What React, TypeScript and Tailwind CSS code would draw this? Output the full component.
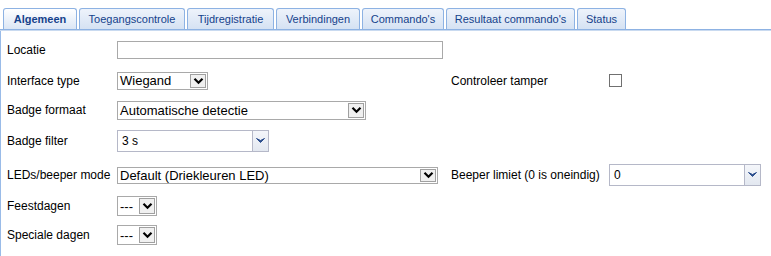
import React from "react";

const tabs = [
  { label: "Algemeen", w: "w-[74px]", active: true },
  { label: "Toegangscontrole", w: "w-[106px]" },
  { label: "Tijdregistratie", w: "w-[87px]" },
  { label: "Verbindingen", w: "w-[84px]" },
  { label: "Commando's", w: "w-[82px]" },
  { label: "Resultaat commando's", w: "w-[129px]" },
  { label: "Status", w: "w-[49px]" },
];

function Chevron() {
  return (
    <svg width="11" height="8" viewBox="0 0 11 8">
      <path d="M1.5 1.8 L5.5 5.8 L9.5 1.8" fill="none" stroke="#000" strokeWidth="2.2" />
    </svg>
  );
}

// native windows-style select
function NativeSelect({ value, w, h }: { value: string; w: string; h: string }) {
  return (
    <div className={`flex ${w} ${h} items-stretch border border-[#a9a9a9] bg-white`}>
      <div className="flex-1 overflow-hidden whitespace-nowrap pl-[2px] text-[13px] leading-none text-black flex items-center">
        {value}
      </div>
      <div className="m-[1px] flex w-[16px] items-center justify-center border border-[#a0a0a0] bg-[#f0f0f0]">
        <Chevron />
      </div>
    </div>
  );
}

// ext-style combo box
function Combo({ value, w }: { value: string; w: string }) {
  return (
    <div className={`flex ${w} h-[22px] items-stretch border border-[#b5b8c8] bg-white`}>
      <div className="flex flex-1 items-center pl-[4px] text-[12px] text-black">{value}</div>
      <div className="flex w-[16px] items-center justify-center border-l border-[#b5b8c8] bg-gradient-to-b from-[#f4f6fa] to-[#e3e8f0]">
        <svg width="9" height="6" viewBox="0 0 9 6">
          <path d="M0.5 0.5 L4.5 4.5 L8.5 0.5 L4.5 2.5 Z" fill="#2a4d8c" stroke="#2a4d8c" strokeWidth="1" />
        </svg>
      </div>
    </div>
  );
}

function Row({ h, label, children, right }: { h: string; label: string; children: React.ReactNode; right?: React.ReactNode }) {
  return (
    <div className={`flex ${h} items-center`}>
      <div className="flex w-[444px] items-center">
        <div className="w-[110px] text-[12px] text-black">{label}</div>
        {children}
      </div>
      {right}
    </div>
  );
}

export default function App() {
  return (
    <div className="h-[256px] w-[771px] overflow-hidden bg-white" style={{ fontFamily: '"Liberation Sans", Arial, sans-serif' }}>
      <div className="flex gap-[2px] pl-[3px] pt-[8px]">
        {tabs.map((t) => (
          <div
            key={t.label}
            className={`flex h-[21px] ${t.w} items-center justify-center rounded-t-[3px] border border-b-0 border-[#8db2e3] text-[11px] text-[#15428b] ${
              t.active ? "bg-gradient-to-b from-white to-[#dbe6f5] font-bold" : "bg-gradient-to-b from-[#eef3fb] to-[#d5e2f3]"
            }`}
          >
            {t.label}
          </div>
        ))}
      </div>
      <div className="h-[2px] border-t border-[#8db2e3] bg-[#c9daf0]" />
      <div className="h-[225px] border-l border-[#99bbe8] pl-[6px] pt-[3px]">
        <Row h="h-[31px]" label="Locatie">
          <div className="h-[18px] w-[326px] border border-[#a9a9a9] bg-white" />
        </Row>
        <Row
          h="h-[31px]"
          label="Interface type"
          right={
            <div className="flex items-center">
              <div className="w-[158px] text-[12px] text-black">Controleer tamper</div>
              <div className="h-[13px] w-[13px] border border-[#707070] bg-white" />
            </div>
          }
        >
          <NativeSelect value="Wiegand" w="w-[91px]" h="h-[18px]" />
        </Row>
        <Row h="h-[28px]" label="Badge formaat">
          <NativeSelect value="Automatische detectie" w="w-[249px]" h="h-[19px]" />
        </Row>
        <Row h="h-[34px]" label="Badge filter">
          <Combo value="3 s" w="w-[152px]" />
        </Row>
        <Row
          h="h-[34px]"
          label="LEDs/beeper mode"
          right={
            <div className="flex items-center">
              <div className="w-[158px] text-[12px] text-black">Beeper limiet (0 is oneindig)</div>
              <Combo value="0" w="w-[152px]" />
            </div>
          }
        >
          <NativeSelect value="Default (Driekleuren LED)" w="w-[321px]" h="h-[17px]" />
        </Row>
        <Row h="h-[28px]" label="Feestdagen">
          <NativeSelect value="---" w="w-[40px]" h="h-[20px]" />
        </Row>
        <Row h="h-[30px]" label="Speciale dagen">
          <NativeSelect value="---" w="w-[40px]" h="h-[20px]" />
        </Row>
      </div>
    </div>
  );
}
